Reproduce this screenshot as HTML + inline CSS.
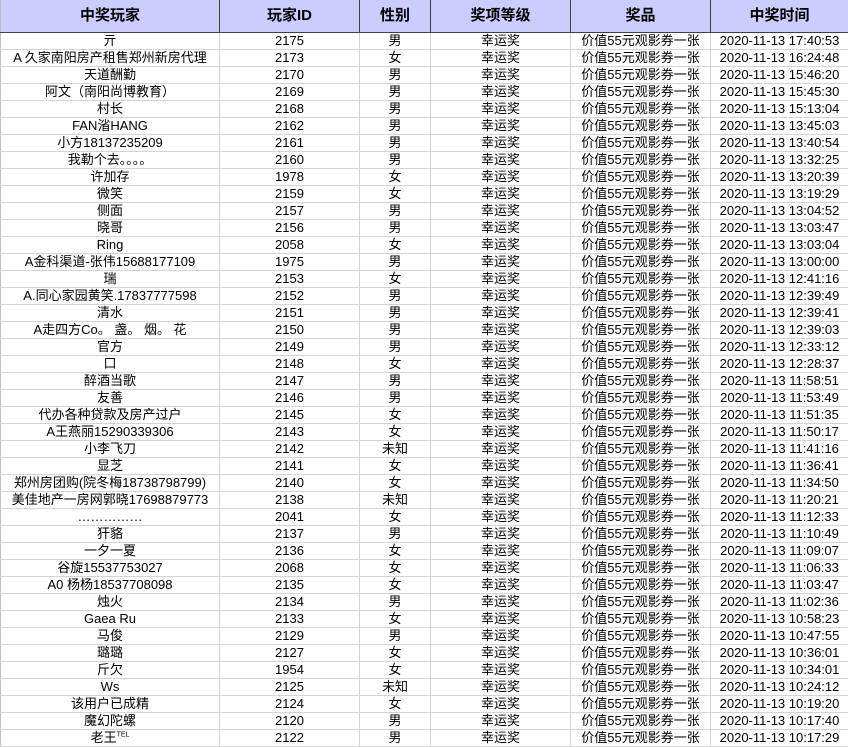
<!DOCTYPE html>
<html><head><meta charset="utf-8"><style>
html,body{margin:0;padding:0;background:#fff;width:848px;height:747px;overflow:hidden}
table{border-collapse:collapse;table-layout:fixed;width:848px;font-family:"Liberation Sans","Noto Sans CJK SC",sans-serif;font-size:13px;color:#000}
td{height:16px;padding:0;border:1px solid #d4d4d4;border-top:none;text-align:center;white-space:nowrap;overflow:hidden;line-height:16px}
th{height:31px;padding:0;background:#ccccff;border:1px solid #404040;border-top:none;font-size:15px;font-weight:bold;line-height:32px}
th:first-child,td:first-child{border-left:1px solid #c0c0c0}
</style></head><body>
<table>
<colgroup><col style="width:219px"><col style="width:140px"><col style="width:71px"><col style="width:140px"><col style="width:140px"><col style="width:138px"></colgroup>
<tr><th>中奖玩家</th><th>玩家ID</th><th>性别</th><th>奖项等级</th><th>奖品</th><th>中奖时间</th></tr>
<tr><td>亓</td><td>2175</td><td>男</td><td>幸运奖</td><td>价值55元观影券一张</td><td>2020-11-13 17:40:53</td></tr>
<tr><td>A 久家南阳房产租售郑州新房代理</td><td>2173</td><td>女</td><td>幸运奖</td><td>价值55元观影券一张</td><td>2020-11-13 16:24:48</td></tr>
<tr><td>天道酬勤</td><td>2170</td><td>男</td><td>幸运奖</td><td>价值55元观影券一张</td><td>2020-11-13 15:46:20</td></tr>
<tr><td>阿文（南阳尚博教育）</td><td>2169</td><td>男</td><td>幸运奖</td><td>价值55元观影券一张</td><td>2020-11-13 15:45:30</td></tr>
<tr><td>村长</td><td>2168</td><td>男</td><td>幸运奖</td><td>价值55元观影券一张</td><td>2020-11-13 15:13:04</td></tr>
<tr><td>FAN渻HANG</td><td>2162</td><td>男</td><td>幸运奖</td><td>价值55元观影券一张</td><td>2020-11-13 13:45:03</td></tr>
<tr><td>小方18137235209</td><td>2161</td><td>男</td><td>幸运奖</td><td>价值55元观影券一张</td><td>2020-11-13 13:40:54</td></tr>
<tr><td>我勒个去。。。。</td><td>2160</td><td>男</td><td>幸运奖</td><td>价值55元观影券一张</td><td>2020-11-13 13:32:25</td></tr>
<tr><td>许加存</td><td>1978</td><td>女</td><td>幸运奖</td><td>价值55元观影券一张</td><td>2020-11-13 13:20:39</td></tr>
<tr><td>微笑</td><td>2159</td><td>女</td><td>幸运奖</td><td>价值55元观影券一张</td><td>2020-11-13 13:19:29</td></tr>
<tr><td>侧面</td><td>2157</td><td>男</td><td>幸运奖</td><td>价值55元观影券一张</td><td>2020-11-13 13:04:52</td></tr>
<tr><td>晓哥</td><td>2156</td><td>男</td><td>幸运奖</td><td>价值55元观影券一张</td><td>2020-11-13 13:03:47</td></tr>
<tr><td>Ring</td><td>2058</td><td>女</td><td>幸运奖</td><td>价值55元观影券一张</td><td>2020-11-13 13:03:04</td></tr>
<tr><td>A金科渠道-张伟15688177109</td><td>1975</td><td>男</td><td>幸运奖</td><td>价值55元观影券一张</td><td>2020-11-13 13:00:00</td></tr>
<tr><td>瑞</td><td>2153</td><td>女</td><td>幸运奖</td><td>价值55元观影券一张</td><td>2020-11-13 12:41:16</td></tr>
<tr><td>A.同心家园黄笑.17837777598</td><td>2152</td><td>男</td><td>幸运奖</td><td>价值55元观影券一张</td><td>2020-11-13 12:39:49</td></tr>
<tr><td>清水</td><td>2151</td><td>男</td><td>幸运奖</td><td>价值55元观影券一张</td><td>2020-11-13 12:39:41</td></tr>
<tr><td>A走四方Co。 盏。 烟。 花</td><td>2150</td><td>男</td><td>幸运奖</td><td>价值55元观影券一张</td><td>2020-11-13 12:39:03</td></tr>
<tr><td>官方</td><td>2149</td><td>男</td><td>幸运奖</td><td>价值55元观影券一张</td><td>2020-11-13 12:33:12</td></tr>
<tr><td>口</td><td>2148</td><td>女</td><td>幸运奖</td><td>价值55元观影券一张</td><td>2020-11-13 12:28:37</td></tr>
<tr><td>醉酒当歌</td><td>2147</td><td>男</td><td>幸运奖</td><td>价值55元观影券一张</td><td>2020-11-13 11:58:51</td></tr>
<tr><td>友善</td><td>2146</td><td>男</td><td>幸运奖</td><td>价值55元观影券一张</td><td>2020-11-13 11:53:49</td></tr>
<tr><td>代办各种贷款及房产过户</td><td>2145</td><td>女</td><td>幸运奖</td><td>价值55元观影券一张</td><td>2020-11-13 11:51:35</td></tr>
<tr><td>A王燕丽15290339306</td><td>2143</td><td>女</td><td>幸运奖</td><td>价值55元观影券一张</td><td>2020-11-13 11:50:17</td></tr>
<tr><td>小李飞刀</td><td>2142</td><td>未知</td><td>幸运奖</td><td>价值55元观影券一张</td><td>2020-11-13 11:41:16</td></tr>
<tr><td>显芝</td><td>2141</td><td>女</td><td>幸运奖</td><td>价值55元观影券一张</td><td>2020-11-13 11:36:41</td></tr>
<tr><td>郑州房团购(院冬梅18738798799)</td><td>2140</td><td>女</td><td>幸运奖</td><td>价值55元观影券一张</td><td>2020-11-13 11:34:50</td></tr>
<tr><td>美佳地产一房网郭晓17698879773</td><td>2138</td><td>未知</td><td>幸运奖</td><td>价值55元观影券一张</td><td>2020-11-13 11:20:21</td></tr>
<tr><td>……………</td><td>2041</td><td>女</td><td>幸运奖</td><td>价值55元观影券一张</td><td>2020-11-13 11:12:33</td></tr>
<tr><td>犴貉</td><td>2137</td><td>男</td><td>幸运奖</td><td>价值55元观影券一张</td><td>2020-11-13 11:10:49</td></tr>
<tr><td>一夕一夏</td><td>2136</td><td>女</td><td>幸运奖</td><td>价值55元观影券一张</td><td>2020-11-13 11:09:07</td></tr>
<tr><td>谷旋15537753027</td><td>2068</td><td>女</td><td>幸运奖</td><td>价值55元观影券一张</td><td>2020-11-13 11:06:33</td></tr>
<tr><td>A0 杨杨18537708098</td><td>2135</td><td>女</td><td>幸运奖</td><td>价值55元观影券一张</td><td>2020-11-13 11:03:47</td></tr>
<tr><td>烛火</td><td>2134</td><td>男</td><td>幸运奖</td><td>价值55元观影券一张</td><td>2020-11-13 11:02:36</td></tr>
<tr><td>Gaea Ru</td><td>2133</td><td>女</td><td>幸运奖</td><td>价值55元观影券一张</td><td>2020-11-13 10:58:23</td></tr>
<tr><td>马俊</td><td>2129</td><td>男</td><td>幸运奖</td><td>价值55元观影券一张</td><td>2020-11-13 10:47:55</td></tr>
<tr><td>璐璐</td><td>2127</td><td>女</td><td>幸运奖</td><td>价值55元观影券一张</td><td>2020-11-13 10:36:01</td></tr>
<tr><td>斤欠</td><td>1954</td><td>女</td><td>幸运奖</td><td>价值55元观影券一张</td><td>2020-11-13 10:34:01</td></tr>
<tr><td>Ws</td><td>2125</td><td>未知</td><td>幸运奖</td><td>价值55元观影券一张</td><td>2020-11-13 10:24:12</td></tr>
<tr><td>该用户已成精</td><td>2124</td><td>女</td><td>幸运奖</td><td>价值55元观影券一张</td><td>2020-11-13 10:19:20</td></tr>
<tr><td>魔幻陀螺</td><td>2120</td><td>男</td><td>幸运奖</td><td>价值55元观影券一张</td><td>2020-11-13 10:17:40</td></tr>
<tr><td>老王<sup style="font-size:7px;line-height:0">TEL</sup></td><td>2122</td><td>男</td><td>幸运奖</td><td>价值55元观影券一张</td><td>2020-11-13 10:17:29</td></tr>
</table>
</body></html>
